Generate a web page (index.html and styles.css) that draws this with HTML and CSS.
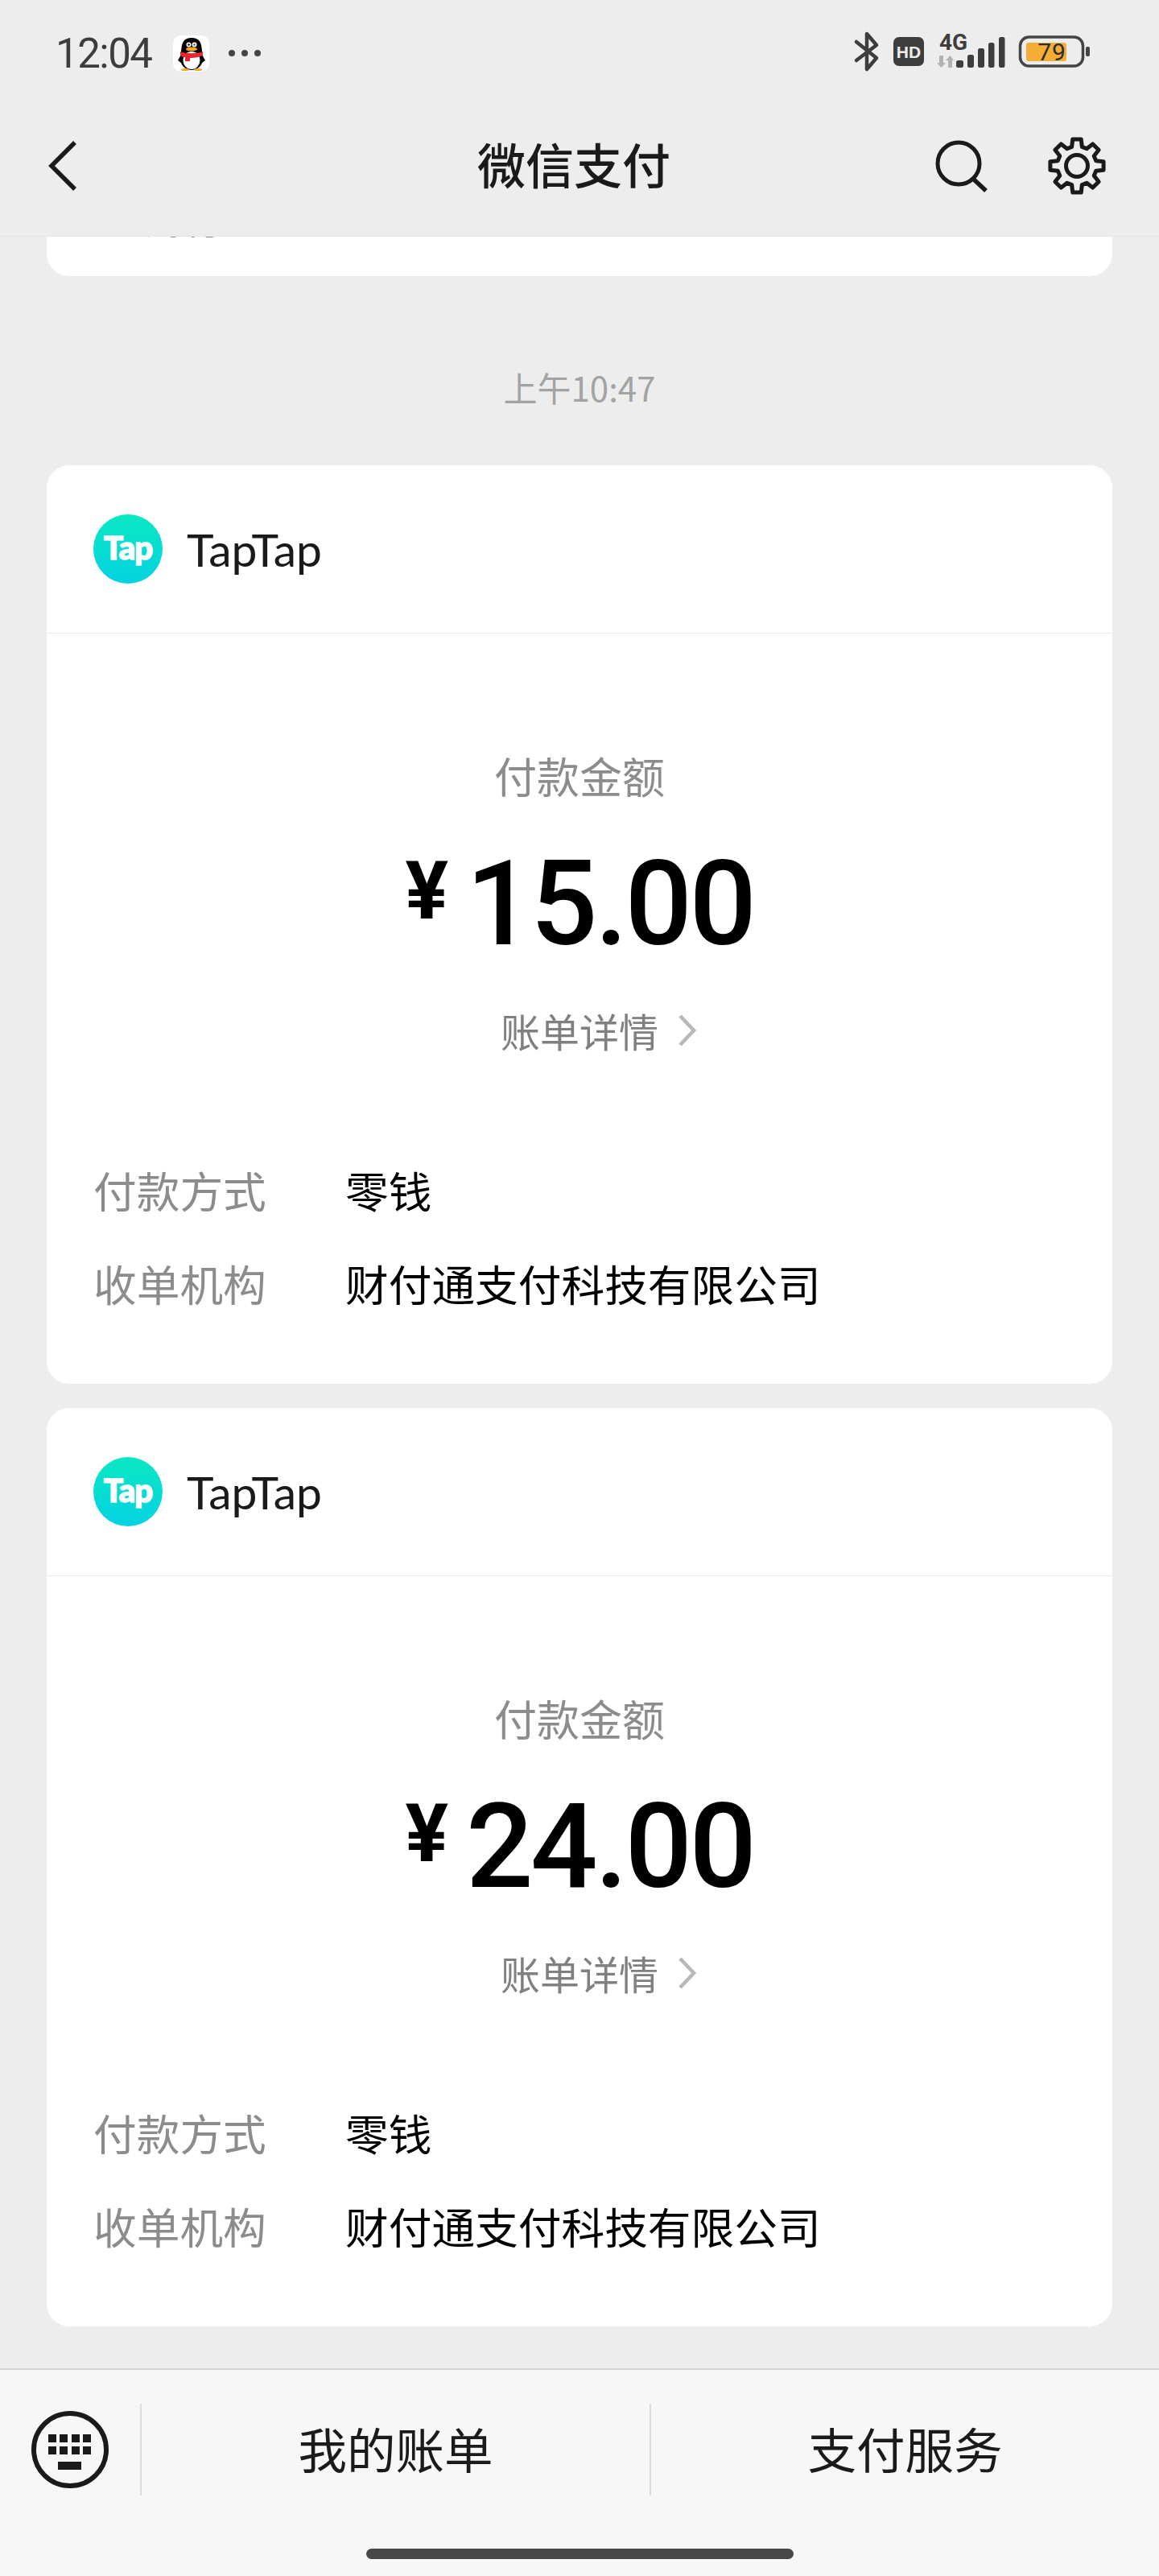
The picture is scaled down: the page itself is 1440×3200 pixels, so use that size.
FILE: index.html
```html
<!DOCTYPE html>
<html lang="zh-CN">
  <head>
    <meta charset="utf-8">
    <meta name="viewport" content="width=device-width, initial-scale=1.0">
    <title>微信支付</title>
    <link rel="stylesheet" href="styles.css">
  </head>
  <body>
    <div class="phone">
      <!-- Barra superior -->
      <header class="top">
        <div class="status">
          <div class="status-left">
            <span class="time">12:04</span>
            <svg class="qq" viewBox="0 0 45 45">
              <rect width="45" height="45" rx="10" fill="#fff"/>
              <ellipse cx="23" cy="29" rx="14" ry="14" fill="#000"/>
              <path d="M6 31 L10 24 L36 24 L40 31 L36 34 L10 34 Z" fill="#000"/>
              <path d="M10 22 C10 8 14 3 23 3 C32 3 36 8 36 22 Z" fill="#000"/>
              <ellipse cx="23" cy="31" rx="10.5" ry="11" fill="#fff"/>
              <path d="M9 20 C16 23 30 23 37 20 L37 25 C32 27 28 28 21 28 L21 32 L15 32 L15 27 C12 27 10 26 9 25 Z" fill="#e8262d"/>
              <circle cx="19.5" cy="11.5" r="3" fill="#fff"/>
              <circle cx="26.5" cy="11.5" r="3" fill="#fff"/>
              <circle cx="19.5" cy="11.5" r="1.2" fill="#000"/>
              <circle cx="26.5" cy="11.5" r="1.2" fill="#555"/>
              <ellipse cx="23" cy="17" rx="7" ry="2.5" fill="#f5a81c"/>
              <ellipse cx="15" cy="42.5" rx="5" ry="1.5" fill="#f5a81c"/>
              <ellipse cx="31" cy="42.5" rx="5" ry="1.5" fill="#f5a81c"/>
            </svg>
            <span class="dots"><i></i><i></i><i></i></span>
          </div>
          <svg class="status-icons" viewBox="0 -10 296 76">
            <path d="M4 14 L29 34 L17 48 V4 L29 18 L4 37" fill="none" stroke="#3d3d3d" stroke-width="4.5" stroke-linejoin="round" stroke-linecap="round"/>
            <rect x="50" y="8" width="38" height="36" rx="7" fill="#3d3d3d"/>
            <text x="69" y="33.5" class="ic-hd">HD</text>
            <text x="107" y="24" class="ic-net">4G</text>
            <path d="M107 31 H112 V40 H115 L109.5 46 L104 40 H107 Z M118 46 H123 V37 H125 L120.5 31 L115 37 H118 Z" fill="#b3b3b3"/>
            <rect x="128" y="37" width="9" height="9" rx="2.5" fill="#3d3d3d"/>
            <rect x="142" y="30" width="8" height="16" rx="2.5" fill="#3d3d3d"/>
            <rect x="155" y="22" width="8" height="24" rx="2.5" fill="#3d3d3d"/>
            <rect x="168" y="15" width="7.5" height="31" rx="2.5" fill="#3d3d3d"/>
            <rect x="181" y="8" width="7.5" height="38" rx="2.5" fill="#3d3d3d"/>
            <rect x="207.5" y="8" width="78" height="36" rx="11" fill="none" stroke="#444" stroke-width="3.5"/>
            <rect x="215" y="15" width="50" height="23" rx="3" fill="#f5ad36"/>
            <text x="247" y="37" class="ic-bat">79</text>
            <rect x="289" y="20" width="5" height="12" rx="2" fill="#444"/>
          </svg>
        </div>
        <nav class="navbar">
          <svg class="back" viewBox="0 0 60 80">
            <path d="M43 11 L14 40 L43 69" fill="none" stroke="#1a1a1a" stroke-width="5.5"/>
          </svg>
          <h1 class="title">微信支付</h1>
          <div class="nav-right">
            <svg class="search" viewBox="0 0 70 70">
              <circle cx="32" cy="32" r="26" fill="none" stroke="#1a1a1a" stroke-width="5"/>
              <path d="M50 51 L66 66" fill="none" stroke="#1a1a1a" stroke-width="5.5"/>
            </svg>
            <svg class="gear" viewBox="-38 -38 76 76">
              <path d="M-6.34 -23.66 L-5.24 -33.09 L5.24 -33.09 L6.34 -23.66 L12.25 -21.22 L19.69 -27.1 L27.1 -19.69 L21.22 -12.25 L23.66 -6.34 L33.09 -5.24 L33.09 5.24 L23.66 6.34 L21.22 12.25 L27.1 19.69 L19.69 27.1 L12.25 21.22 L6.34 23.66 L5.24 33.09 L-5.24 33.09 L-6.34 23.66 L-12.25 21.22 L-19.69 27.1 L-27.1 19.69 L-21.22 12.25 L-23.66 6.34 L-33.09 5.24 L-33.09 -5.24 L-23.66 -6.34 L-21.22 -12.25 L-27.1 -19.69 L-19.69 -27.1 L-12.25 -21.22 Z" fill="none" stroke="#1a1a1a" stroke-width="5" stroke-linejoin="round"/>
              <circle r="13.5" fill="none" stroke="#1a1a1a" stroke-width="5"/>
            </svg>
          </div>
        </nav>
      </header>

      <!-- Lista de mensajes -->
      <main class="list">
        <div class="stub"><p>财付通</p></div>
        <p class="msg-time">上午10:47</p>

        <section class="card">
          <div class="card-head">
            <span class="logo">Tap</span>
            <span class="app-name">TapTap</span>
          </div>
          <div class="card-body">
            <p class="pay-label">付款金额</p>
            <p class="amount"><span class="yen">¥</span><span>15.00</span></p>
            <p class="detail">账单详情
              <svg class="arrow" viewBox="0 0 24 42"><path d="M3 3 L20 21 L3 39" fill="none" stroke="#b8b8b8" stroke-width="4.5"/></svg>
            </p>
            <div class="rows">
              <div class="row"><span class="key">付款方式</span><span class="val">零钱</span></div>
              <div class="row"><span class="key">收单机构</span><span class="val">财付通支付科技有限公司</span></div>
            </div>
          </div>
        </section>

        <section class="card">
          <div class="card-head">
            <span class="logo">Tap</span>
            <span class="app-name">TapTap</span>
          </div>
          <div class="card-body">
            <p class="pay-label">付款金额</p>
            <p class="amount"><span class="yen">¥</span><span>24.00</span></p>
            <p class="detail">账单详情
              <svg class="arrow" viewBox="0 0 24 42"><path d="M3 3 L20 21 L3 39" fill="none" stroke="#b8b8b8" stroke-width="4.5"/></svg>
            </p>
            <div class="rows">
              <div class="row"><span class="key">付款方式</span><span class="val">零钱</span></div>
              <div class="row"><span class="key">收单机构</span><span class="val">财付通支付科技有限公司</span></div>
            </div>
          </div>
        </section>
      </main>

      <!-- Menú inferior -->
      <footer class="bottom">
        <div class="tabs">
          <div class="kb-cell">
            <svg class="keyboard" viewBox="0 0 96 96" fill="#1a1a1a">
              <circle cx="48" cy="48" r="45" fill="none" stroke="#1a1a1a" stroke-width="6"/>
              <rect x="21" y="29" width="10" height="10"/>
              <rect x="35" y="29" width="10" height="10"/>
              <rect x="50" y="29" width="10" height="10"/>
              <rect x="64" y="29" width="10" height="10"/>
              <rect x="21" y="44" width="10" height="10"/>
              <rect x="35" y="44" width="10" height="10"/>
              <rect x="50" y="44" width="10" height="10"/>
              <rect x="64" y="44" width="10" height="10"/>
              <rect x="33" y="63" width="29" height="10"/>
            </svg>
          </div>
          <div class="tab">我的账单</div>
          <div class="tab">支付服务</div>
        </div>
        <div class="home-bar"></div>
      </footer>
    </div>
  </body>
</html>
```

FILE: styles.css
```css
/* Reset */
* {
  margin: 0;
  padding: 0;
  box-sizing: border-box;
}

body {
  font-family: "Noto Sans CJK SC", "Noto Sans", sans-serif;
  background: #ededed;
}

.phone {
  width: 1440px;
  height: 3200px;
  display: flex;
  flex-direction: column;
  overflow: hidden;
}

/* Top */
.top {
  height: 294px;
  background: #ededed;
  border-bottom: 1px solid #e6e6e6;
}

.status {
  height: 132px;
  display: flex;
  align-items: center;
  justify-content: space-between;
  padding: 0 84px 0 69px;
}

.status-left {
  display: flex;
  align-items: center;
}

.time {
  font-family: Roboto, sans-serif;
  font-size: 51px;
  letter-spacing: -1.5px;
  color: #3d3d3d;
  width: 146px;
}

.qq {
  width: 45px;
  height: 45px;
}

.dots {
  display: flex;
  gap: 8px;
  margin-left: 24px;
}

.dots i {
  width: 8px;
  height: 8px;
  border-radius: 50%;
  background: #444;
}

.status-icons {
  width: 296px;
  height: 76px;
}

.ic-hd {
  font-family: "Liberation Sans", sans-serif;
  font-size: 21px;
  font-weight: bold;
  fill: #ededed;
  text-anchor: middle;
}

.ic-net {
  font-family: Roboto, sans-serif;
  font-size: 28px;
  font-weight: bold;
  fill: #3d3d3d;
}

.ic-bat {
  font-family: Roboto, sans-serif;
  font-size: 30px;
  letter-spacing: 1px;
  fill: #2c2c2c;
  text-anchor: middle;
}

.navbar {
  height: 148px;
  display: grid;
  grid-template-columns: 1fr auto 1fr;
  align-items: center;
  padding: 0 64px 0 50px;
}

.back {
  width: 60px;
  height: 80px;
}

.title {
  font-size: 60px;
  font-weight: 500;
  color: #1a1a1a;
  padding-bottom: 8px;
}

.nav-right {
  display: flex;
  justify-content: flex-end;
  align-items: center;
  gap: 71px;
}

.search {
  width: 70px;
  height: 70px;
}

.gear {
  width: 76px;
  height: 76px;
}

/* Lista */
.list {
  flex: 1;
  overflow: hidden;
  padding: 0 58px;
}

.stub {
  height: 49px;
  background: #fff;
  border-radius: 0 0 28px 28px;
  overflow: hidden;
  padding-left: 123px;
}

.stub p {
  font-size: 48px;
  line-height: 60px;
  margin-top: -55px;
  color: #333;
}

.msg-time {
  margin: 108px 0 67px;
  text-align: center;
  font-size: 42px;
  line-height: 60px;
  color: #a3a3a3;
}

.card {
  background: #fff;
  border-radius: 28px;
  margin-bottom: 30px;
}

.card-head {
  height: 209px;
  display: flex;
  align-items: center;
  gap: 30px;
  padding: 0 0 0 58px;
  border-bottom: 1px solid #e9e9e9;
}

.logo {
  width: 86px;
  height: 86px;
  border-radius: 50%;
  background: linear-gradient(#0be8c2, #04d2e2);
  display: flex;
  align-items: center;
  justify-content: center;
  padding-bottom: 5px;
  font-family: Lato, sans-serif;
  font-size: 40px;
  font-weight: 900;
  color: #fff;
  letter-spacing: -1px;
  -webkit-text-stroke: 1.5px #fff;
}

.app-name {
  font-family: Lato, sans-serif;
  font-size: 57px;
  color: #1a1a1a;
}

.card-body {
  padding: 141px 0 90px;
  text-align: center;
}

.pay-label {
  font-size: 53px;
  line-height: 70px;
  color: #8c8c8c;
}

.amount {
  margin-top: 45px;
  display: flex;
  justify-content: center;
  align-items: center;
  font-family: Roboto, sans-serif;
  font-weight: 500;
  font-size: 147px;
  line-height: 160px;
  letter-spacing: -3.5px;
  color: #000;
}

.yen {
  font-size: 100px;
  font-weight: 700;
  line-height: 100px;
  letter-spacing: 0;
  margin: 0 22px 32px 0;
}

.detail {
  margin-top: 47px;
  font-size: 49px;
  line-height: 60px;
  color: #808080;
  display: flex;
  justify-content: center;
  align-items: center;
  gap: 24px;
}

.arrow {
  width: 24px;
  height: 42px;
  margin-right: -48px;
}

.rows {
  margin-top: 133px;
  padding-left: 58px;
  display: flex;
  flex-direction: column;
  gap: 46px;
  text-align: left;
}

.row {
  display: flex;
  font-size: 53.7px;
  line-height: 70px;
}

.key {
  width: 313px;
  color: #8c8c8c;
}

.val {
  color: #000;
}

/* Bottom */
.bottom {
  height: 258px;
  background: #f7f7f7;
  border-top: 2px solid #d2d2d2;
  padding-top: 42px;
}

.tabs {
  height: 114px;
  display: grid;
  grid-template-columns: 174px 1fr 1fr;
  align-items: stretch;
}

.kb-cell {
  display: flex;
  align-items: center;
  padding-left: 39px;
}

.keyboard {
  width: 96px;
  height: 96px;
}

.tab {
  display: flex;
  align-items: center;
  justify-content: center;
  padding-bottom: 6px;
  border-left: 2px solid #dcdcdc;
  font-size: 60.5px;
  color: #1a1a1a;
}

.home-bar {
  width: 531px;
  height: 13px;
  margin: 66px auto 0;
  border-radius: 7px;
  background: #484848;
}
```
